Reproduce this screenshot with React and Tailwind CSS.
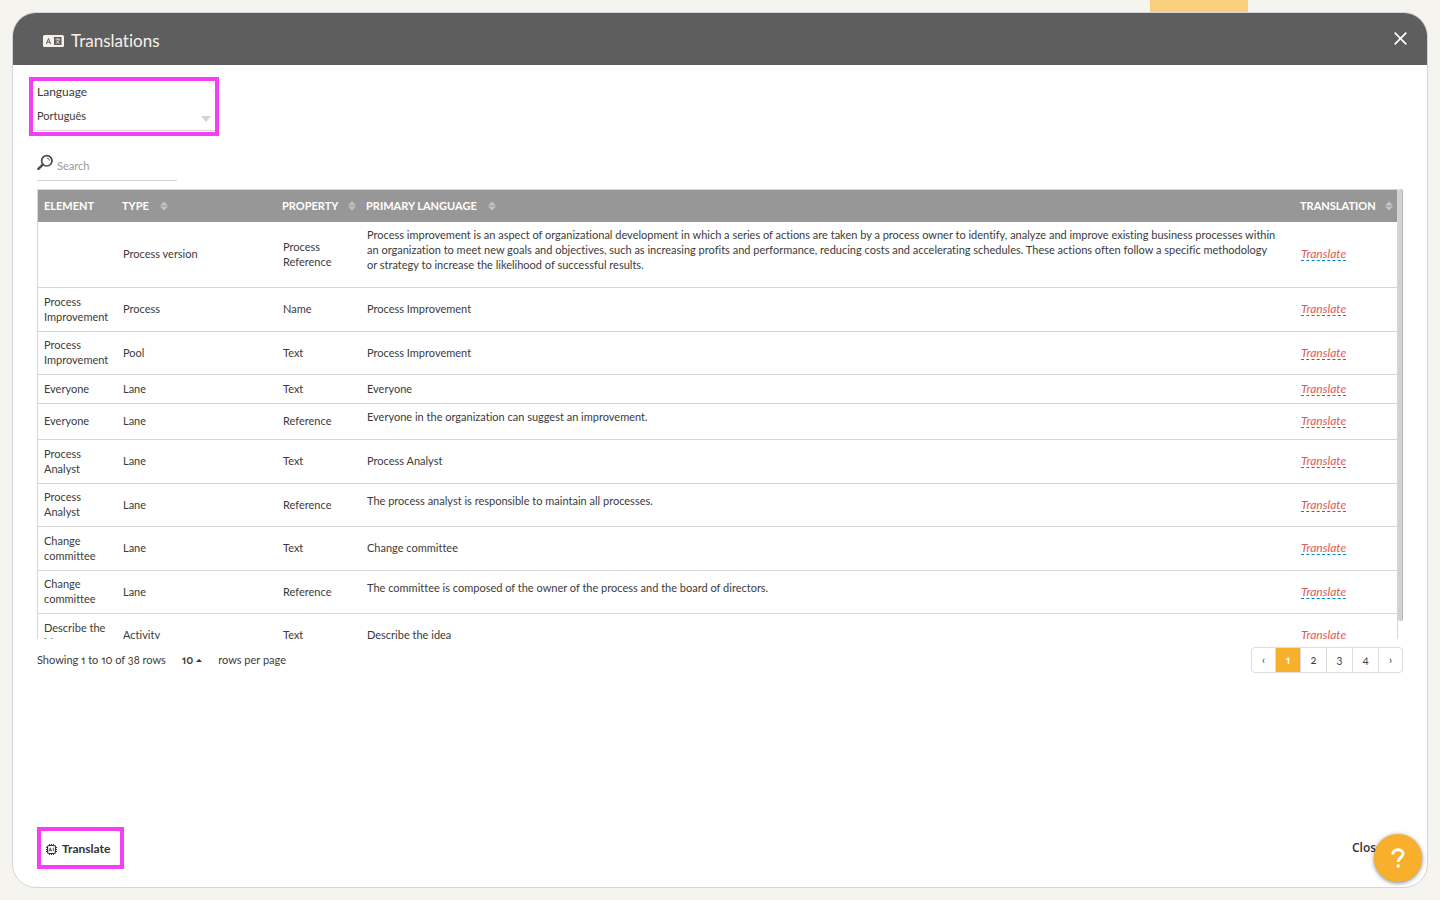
const rows = [
  {
    element: '',
    type: 'Process version',
    property: 'Process Reference',
    primary: [
      'Process improvement is an aspect of organizational development in which a series of actions are taken by a process owner to identify, analyze and improve existing business processes within',
      'an organization to meet new goals and objectives, such as increasing profits and performance, reducing costs and accelerating schedules. These actions often follow a specific methodology',
      'or strategy to increase the likelihood of successful results.',
    ],
    height: 'h-[66px]',
    rich: true,
  },
  { element: 'Process Improvement', type: 'Process', property: 'Name', primary: ['Process Improvement'], height: 'h-[44px]' },
  { element: 'Process Improvement', type: 'Pool', property: 'Text', primary: ['Process Improvement'], height: 'h-[43px]' },
  { element: 'Everyone', type: 'Lane', property: 'Text', primary: ['Everyone'], height: 'h-[29px]' },
  { element: 'Everyone', type: 'Lane', property: 'Reference', primary: ['Everyone in the organization can suggest an improvement.'], height: 'h-[36px]', rich: true },
  { element: 'Process Analyst', type: 'Lane', property: 'Text', primary: ['Process Analyst'], height: 'h-[44px]' },
  { element: 'Process Analyst', type: 'Lane', property: 'Reference', primary: ['The process analyst is responsible to maintain all processes.'], height: 'h-[43px]', rich: true },
  { element: 'Change committee', type: 'Lane', property: 'Text', primary: ['Change committee'], height: 'h-[44px]' },
  { element: 'Change committee', type: 'Lane', property: 'Reference', primary: ['The committee is composed of the owner of the process and the board of directors.'], height: 'h-[43px]', rich: true },
  { element: 'Describe the idea', type: 'Activity', property: 'Text', primary: ['Describe the idea'], height: 'h-[44px]' },
];

const SortIcon = () => (
  <svg width="8" height="10" viewBox="0 0 8 10" className="mt-0.5 shrink-0" fill="#c3c3c3" aria-hidden="true">
    <path d="M4 0.5 L8 4.5 H0 Z M0 5.5 H8 L4 9.5 Z" />
  </svg>
);

const TranslationsIcon = () => (
  <svg width="21" height="12" viewBox="0 0 21 12" aria-hidden="true">
    <rect width="21" height="12" rx="1.5" fill="#f6f1ea" />
    <rect x="11" y="2" width="7.5" height="8" fill="#5e5e5e" />
    <path d="M3.3 9 L5.5 3.5 L7.7 9 M4.1 7.2 H6.9" fill="none" stroke="#5e5e5e" strokeWidth="1" />
    <path d="M12.5 4.2 H17 M14.7 3 V4.2 M16 4.5 C15.6 6.5 14.5 7.8 12.8 8.6 M13.6 5.6 C14.3 7 15.3 8 16.6 8.5" fill="none" stroke="#f6f1ea" strokeWidth="0.8" />
  </svg>
);

const SearchIcon = () => (
  <svg width="16" height="17" viewBox="0 -1 16 17" fill="none" stroke="#4a4a4a" aria-hidden="true">
    <circle cx="9.8" cy="5.8" r="5.2" strokeWidth="1.7" />
    <path d="M10 3.2 C11.4 3.2 12.4 4.2 12.4 5.6" strokeWidth="1" />
    <path d="M5.8 9.6 L1.4 13.8" strokeWidth="2.4" strokeLinecap="round" />
  </svg>
);

const ChipIcon = () => (
  <svg width="11" height="11" viewBox="0 0 11 11" fill="none" stroke="#333" aria-hidden="true">
    <rect x="1.5" y="1.5" width="8" height="8" rx="1.5" strokeWidth="1.2" />
    <path d="M3.5 0 V1.5 M5.5 0 V1.5 M7.5 0 V1.5 M3.5 9.5 V11 M5.5 9.5 V11 M7.5 9.5 V11 M0 3.5 H1.5 M0 5.5 H1.5 M0 7.5 H1.5 M9.5 3.5 H11 M9.5 5.5 H11 M9.5 7.5 H11" />
    <path d="M3 7.3 L4.3 3.8 L5.6 7.3 M3.5 6.3 H5.1 M7.3 3.7 V7.3" strokeWidth="0.8" />
  </svg>
);

function HeaderCell({ children, sortable = true, spread = false }) {
  return (
    <th scope="col" className="pr-1 pb-0.5 pl-1.5 text-left font-bold text-white">
      <div className={spread ? 'flex items-center justify-between whitespace-nowrap' : 'flex items-center gap-[11px] whitespace-nowrap'}>
        {children}
        {sortable && <SortIcon />}
      </div>
    </th>
  );
}

function TranslationsTable() {
  return (
    <div className="flex h-[450px] items-start overflow-hidden">
      <table className="w-full flex-1 table-fixed border-separate border-spacing-0 border border-[#d5d5d5] text-[11px] leading-[15px]">
        <colgroup>
          <col className="w-[78px]" />
          <col className="w-[160px]" />
          <col className="w-[84px]" />
          <col />
          <col className="w-[103px]" />
        </colgroup>
        <thead>
          <tr className="h-8 bg-[#979797]">
            <HeaderCell sortable={false}>ELEMENT</HeaderCell>
            <HeaderCell>TYPE</HeaderCell>
            <HeaderCell spread>PROPERTY</HeaderCell>
            <HeaderCell>PRIMARY LANGUAGE</HeaderCell>
            <HeaderCell spread>TRANSLATION</HeaderCell>
          </tr>
        </thead>
        <tbody>
          {rows.map((row, index) => (
            <tr key={index} className={row.height}>
              <td className="border-b border-[#d5d5d5] pb-0.5 pl-1.5">{row.element}</td>
              <td className="border-b border-[#d5d5d5] px-[7px] pb-0.5">{row.type}</td>
              <td className="border-b border-[#d5d5d5] px-[7px] pb-0.5">{row.property}</td>
              <td className={row.rich ? 'border-b border-[#d5d5d5] px-[7px] pb-2.5' : 'border-b border-[#d5d5d5] px-[7px] pb-0.5'}>
                {row.primary.map((line) => (
                  <span key={line} className="block whitespace-nowrap">{line}</span>
                ))}
              </td>
              <td className="border-b border-[#d5d5d5] px-[7px] pb-0.5">
                <a href="#translate" className="inline-block border-b border-dashed border-[#0088cc] text-xs leading-[13px] text-[#e05a5a] italic">
                  Translate
                </a>
              </td>
            </tr>
          ))}
        </tbody>
      </table>
      <div className="h-[432px] w-[5px] rounded-sm border-r border-[#b5b5b5] bg-[#d2d2d2]" />
    </div>
  );
}

function Pagination() {
  const pages = ['‹', '1', '2', '3', '4', '›'];
  return (
    <nav aria-label="Pages" className="flex h-[26px] divide-x divide-[#dddddd] overflow-hidden rounded border border-[#dddddd]">
      {pages.map((page) => (
        <button
          key={page}
          type="button"
          className={page === '1' ? 'w-[25px] bg-[#f8af2b] text-[11px] font-bold text-white' : 'w-[26px] text-[11px] first:w-6 last:w-[23px]'}
        >
          {page}
        </button>
      ))}
    </nav>
  );
}

export default function App() {
  return (
    <div className="relative flex h-screen bg-[#f5f4ef] p-3 font-['Lato','Open_Sans',sans-serif] text-[#3b3b3b] oldstyle-nums proportional-nums [font-variant-ligatures:none]">
      {/* tab of the page behind the dialog */}
      <div className="absolute top-0 right-[192px] h-3 w-[98px] bg-[#f9ce7f]" />

      <div role="dialog" aria-labelledby="dialog-title" className="flex flex-1 flex-col overflow-hidden rounded-[24px] border border-[#d5d5d5] bg-white">
        <header className="flex h-[52px] shrink-0 items-center justify-between bg-[#5e5e5e] pr-5 pl-[30px]">
          <div className="flex items-center gap-[7px] pt-[3px]">
            <TranslationsIcon />
            <h1 id="dialog-title" className="text-[17px] leading-6 text-[#f6f1ea]">Translations</h1>
          </div>
          <button type="button" aria-label="Close dialog" className="pb-0.5">
            <svg width="13" height="13" viewBox="0 0 13 13" fill="none" stroke="#fff" strokeWidth="1.7" aria-hidden="true">
              <path d="M0.7 0.7 L12.3 12.3 M12.3 0.7 L0.7 12.3" />
            </svg>
          </button>
        </header>

        <main className="flex flex-1 flex-col px-6 pt-3">
          <div className="-ml-2 flex h-[59px] w-[190px] flex-col border-4 border-[#f43ff7] pt-[3px] pl-1 text-[11px]">
            <label htmlFor="language" className="text-xs leading-[15px]">Language</label>
            <div className="mt-[9px] flex h-[23px] items-start justify-between border-b border-[#d5d5d5] pr-1">
              <select id="language" defaultValue="pt" className="flex-1 appearance-none leading-[15px]">
                <option value="pt">Português</option>
                <option value="en">English</option>
              </select>
              <svg width="10" height="6" viewBox="0 0 10 6" className="mt-2" fill="#d5d5d5" aria-hidden="true">
                <path d="M0 0 H10 L5 6 Z" />
              </svg>
            </div>
          </div>

          <div className="mt-[18px] mb-2 flex h-[27px] w-[140px] gap-1 border-b border-[#d5d5d5]">
            <SearchIcon />
            <input type="text" aria-label="Search" placeholder="Search" className="h-[22px] min-w-0 flex-1 text-[11px] outline-none placeholder:text-[#999999]" />
          </div>

          <TranslationsTable />

          <div className="mt-2 flex items-center justify-between text-[11px]">
            <div className="flex items-center">
              <span>Showing 1 to 10 of 38 rows</span>
              <button type="button" className="mx-4 flex items-center gap-[3px] font-bold">
                10
                <svg width="6" height="3" viewBox="0 0 6 3" fill="#333" aria-hidden="true">
                  <path d="M3 0 L6 3 H0 Z" />
                </svg>
              </button>
              <span>rows per page</span>
            </div>
            <Pagination />
          </div>

          <footer className="mt-auto mb-[18px] flex items-center justify-between">
            <button type="button" className="flex h-[42px] w-[87px] items-center gap-[5px] border-4 border-[#f43ff7] pt-0.5 pl-[5px] text-xs font-bold text-[#333]">
              <ChipIcon />
              Translate
            </button>
            <button type="button" className="mr-5 font-['Open_Sans',sans-serif] text-xs font-semibold text-[#333]">Close</button>
          </footer>
        </main>
      </div>

      <button
        type="button"
        aria-label="Help"
        className="absolute right-[18px] bottom-[18px] flex size-12 items-center justify-center rounded-full bg-[#f8af2b] shadow-[0_1px_4px_rgba(0,0,0,0.5)]"
      >
        <svg width="14" height="20" viewBox="0 0 14 20" fill="none" stroke="#fff" strokeWidth="3" aria-hidden="true">
          <path d="M1.8 6.5 C1.8 3.5 4 1.7 7 1.7 C10 1.7 12 3.5 12 6 C12 9.3 7.2 9.6 7.2 14" />
          <circle cx="7.2" cy="18" r="1.8" fill="#fff" stroke="none" />
        </svg>
      </button>
    </div>
  );
}
